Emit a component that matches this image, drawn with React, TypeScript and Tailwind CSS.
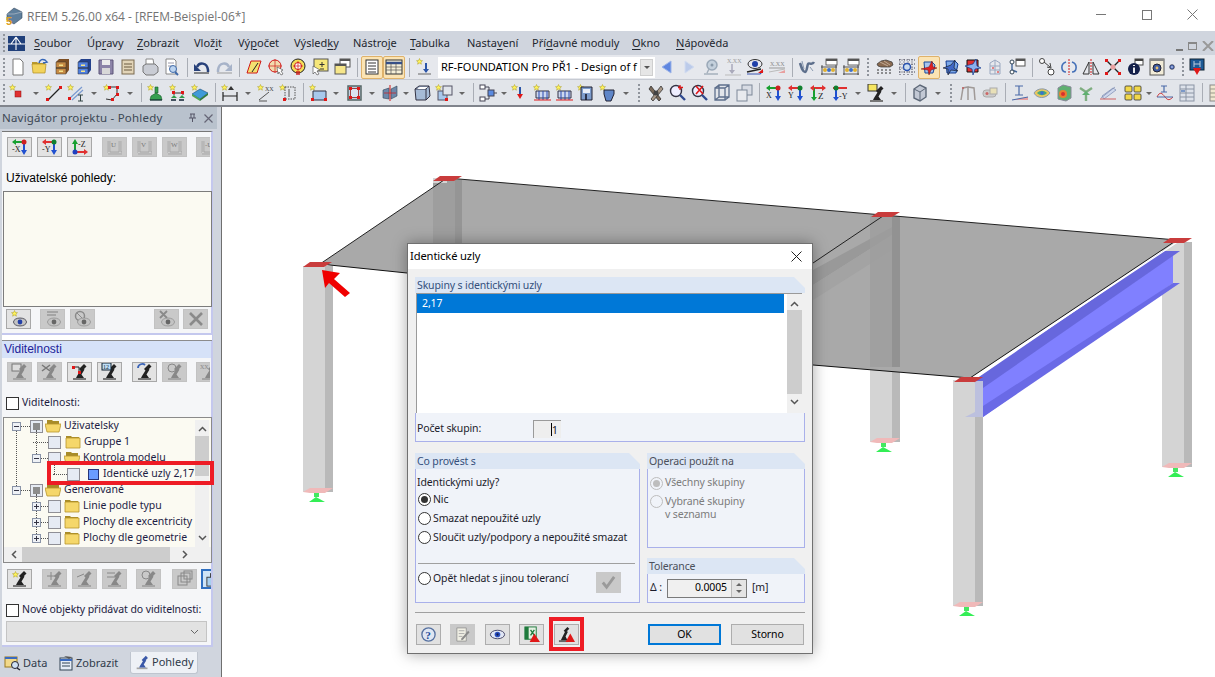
import React from 'react';

const star = <path d="M3.5 .5l.9 2 2.1.2-1.6 1.4.5 2.1-1.9-1.1-1.9 1.1.5-2.1L.5 2.700l2.100-.2z" fill="#fff35a" stroke="#a89a20" strokeWidth=".5" />;
const dot = (x: number, y: number) => <rect x={x} y={y} width="3" height="3" fill="#e01818" />;
const txt = (x: number, y: number, s: string, c = '#333', z = 6) => <text x={x} y={y} fontSize={z} fontFamily="'Liberation Serif',serif" fill={c}>{s}</text>;
const folder = <g><path d="M1 6V4h5l1 1h7v2H1z" fill="#b89a30" /><path d="M1 6h14l-1 9H2z" fill="#f2d35c" stroke="#b08c20" strokeWidth=".7" /></g>;
const mic = (c = '#222') => <g><path d="M2 15h13v2H2z" fill={c === '#222' ? '#777' : '#a5a5a5'} /><path d="M6 13l5-8 2.500 1.500-3 5 2.500 3.500H5z" fill={c} /><path d="M8 6l5-5 2.500 2.500-5 5z" fill={c} /></g>;
const eyeG = (c = '#8a8a8a', p = '#666') => <g><ellipse cx="10" cy="12" rx="6.500" ry="4" fill="#c4c4c4" stroke={c} strokeWidth=".7" /><circle cx="10" cy="12" r="2.400" fill={p} /></g>;
const cabinet = (a: string, b: string) => <g><path d="M3 4l3-3h10v11l-3 4H3z" fill={a} /><path d="M3 4h10v12H3z" fill={b} stroke="#333" strokeWidth=".5" /><path d="M3 10h10" stroke="#222" /><rect x="6" y="6.500" width="4" height="1.500" fill="#f4e48c" /><rect x="6" y="12.500" width="4" height="1.500" fill="#f4e48c" /></g>;
const abacus = <g><rect x="6" y="1" width="11" height="6" fill="#fff" stroke="#444" strokeWidth=".8" /><path d="M6 1h11v2H6z" fill="#555" /><path d="M1 9h16M1 16h16M2 7v10M16 7v10" stroke="#333" strokeWidth=".8" fill="none" /><circle cx="5" cy="12" r="2" fill="#e0b030" /><circle cx="9" cy="12" r="2" fill="#3f70c8" /><circle cx="13" cy="12" r="2" fill="#e0b030" /></g>;
const cubeW = (f: string, e = '#1a4a9a') => <g><path d="M4 4h8l3 3-2 8H5z" fill={f} stroke={e} /><path d="M1 11L9 9l3-6 1 6 4 1-6 2-2 5-1-5z" fill="#e02020" stroke="#701010" strokeWidth=".5" /></g>;
const axis = (a: string, b: string, c: string, t: string) => (
  <g>
    <path d="M2 4h12" stroke={a} strokeWidth="2" /><path d="M1 4l4-3v6z" fill={a} />
    <path d="M13 4v10" stroke={b} strokeWidth="2" /><path d="M10 12h6l-3 5z" fill={b} />
    <circle cx="13" cy="4" r="2.500" fill={c} />
    {txt(1, 14, t, '#222', 8)}
  </g>
);
const grayAxis = (t: string) => (
  <g fill="none">
    <path d="M2 15h14M14 3v12M3 3v12" stroke="#8c8c8c" strokeWidth="2.400" />
    <path d="M2 15h14M14 3v12M3 3v12" stroke="#e2e2e2" strokeWidth="1" />
    <text x="5" y="9" fontSize="7" fontFamily="'Liberation Serif',serif" fill="#777">{t}</text>
  </g>
);

const icons: Record<string, React.ReactNode> = {
  new: <path d="M4 1h7l3 3v13H4z" fill="#fff" stroke="#777" />,
  open: <g>{folder}<path d="M8 5c1-4 4-4 6-3l2 2-4 1" fill="none" stroke="#3566b8" strokeWidth="1.500" /></g>,
  cabB: cabinet('#7d4f24', '#c68a44'),
  cabN: cabinet('#23418c', '#4f7fe0'),
  floppy: <g><path d="M2 2h14v14H2z" fill="#8c84a8" stroke="#5c5478" /><rect x="5" y="2" width="8" height="5" fill="#ececec" /><rect x="5" y="10" width="8" height="6" fill="#d8d8d8" /></g>,
  notes: <g><rect x="3" y="2" width="12" height="14" fill="#e2d4b8" stroke="#7a6a50" /><path d="M5 6h8M5 9h8M5 12h8" stroke="#6a5a40" /></g>,
  print: <g><path d="M5 1h7l1 6H5z" fill="#fff" stroke="#888" /><path d="M2 8l3-2h9l3 3v5l-4 3H5l-3-3z" fill="#c9ccd4" stroke="#777" /></g>,
  preview: <g><path d="M3 1h8l2 2v13H3z" fill="#fff" stroke="#888" /><path d="M5 5h6M5 8h4" stroke="#99a" /><circle cx="10" cy="11" r="3.500" fill="#bcd4f0" stroke="#406aa8" /><path d="M12 14l3 3" stroke="#406aa8" strokeWidth="2" /></g>,
  undo: <g><path d="M4 9c2-5 10-5 11 3v2" fill="none" stroke="#28417a" strokeWidth="2.500" /><path d="M1 6l7 7H1z" fill="#28417a" /><path d="M1 15h15" stroke="#222" /></g>,
  redo: <g><path d="M14 9C12 4 4 4 3 12v2" fill="none" stroke="#a7b3c9" strokeWidth="2.500" /><path d="M17 6l-7 7h7z" fill="#a7b3c9" /><path d="M2 15h15" stroke="#999" /></g>,
  para: <g><path d="M6 3h10l-4 12H2z" fill="#f4e070" stroke="#d01818" /><path d="M7 14l6-9" stroke="#222" /></g>,
  target: <g><circle cx="8" cy="8" r="6" fill="#f2dcae" stroke="#d01818" /><path d="M8 1v14M1 8h14" stroke="#d01818" strokeWidth=".7" /><path d="M10 9l6 3-2 1 2 3-2 1-2-3-1 2z" fill="#fff" stroke="#444" strokeWidth=".6" /></g>,
  targetY: <g><circle cx="9" cy="8" r="7" fill="#f4de58" stroke="#222" /><circle cx="9" cy="8" r="3.500" fill="#fff" stroke="#d01818" /><path d="M9 3v10M4 8h10" stroke="#d01818" strokeWidth=".7" /><path d="M7 13h4v4H7z" fill="#d01818" opacity=".7" /></g>,
  noteC: <g><rect x="3" y="1" width="14" height="12" fill="#f6e77a" stroke="#555" /><path d="M11 4v5M8.500 6.500h5M9 11h4" stroke="#333" /><path d="M2 8l7 4-3 1 2 3-2 1-2-3-2 2z" fill="#fff" stroke="#444" strokeWidth=".6" /></g>,
  wins: <g><rect x="7" y="1" width="10" height="8" fill="#fff" stroke="#555" /><path d="M7 1h10v2H7z" fill="#555" /><rect x="2" y="6" width="11" height="10" fill="#f6e68a" stroke="#555" /><path d="M2 6h11v2H2z" fill="#555" /></g>,
  list: <g><rect x="3" y="2" width="12" height="14" fill="#fff" stroke="#333" /><path d="M5 5h8M5 8h8M5 11h8M5 14h8" stroke="#333" /></g>,
  table: <g><rect x="1" y="2" width="16" height="14" fill="#f6f0d8" stroke="#333" /><path d="M1 5h16" stroke="#35508a" strokeWidth="2.500" /><path d="M1 9h16M1 12h16M6 5v11M11 5v11" stroke="#555" strokeWidth=".7" /></g>,
  arrStar: <g><g transform="translate(1 0)">{star}</g><path d="M11 5v9" stroke="#2b55a8" strokeWidth="2" /><path d="M8 11h6l-3 4z" fill="#2b55a8" /><path d="M3 16h13" stroke="#666" /></g>,
  navL: <path d="M13 3v12L4 9z" fill="#5f86e0" stroke="#9db4e8" />,
  navR: <path d="M5 3v12l9-6z" fill="#bccbea" stroke="#d2dcf0" />,
  pinG: <g><circle cx="10" cy="7" r="5" fill="#c4d0dc" stroke="#9aa8b8" strokeWidth="1.500" /><circle cx="10" cy="7" r="1.500" fill="#8898a8" /><path d="M7 11l-2 4M2 16h14" stroke="#a5b0bc" strokeWidth="1.500" /></g>,
  xxD: <g>{txt(3, 5, 'X.XX', '#9a9a9a')}<path d="M8 6v9" stroke="#aab" strokeWidth="1.500" /><path d="M5 12h6l-3 4z" fill="#aab" /><path d="M1 17h16" stroke="#bbb" /></g>,
  eye: <g><ellipse cx="9" cy="6" rx="7" ry="4.500" fill="#e8e8f0" stroke="#333" /><circle cx="9" cy="6" r="3" fill="#1f3fa8" /><path d="M1 14l14-3" stroke="#222" strokeWidth="1.500" /><path d="M1 16h13l3-3" stroke="#3a54b0" strokeWidth="1.200" fill="none" /><path d="M12 15l5-4v4z" fill="#e01818" /></g>,
  xxL: <g>{txt(2, 8, 'X.XX', '#8a8a8a')}<path d="M1 10h16" stroke="#999" /><path d="M1 14l16-3" stroke="#bbb" /><path d="M10 15l7-3v3z" fill="#e8a0a0" /></g>,
  wave: <g><path d="M2 5c2 6 3 9 5 9s2-6 3-8 4 2 6-2" fill="none" stroke="#5d6f8c" strokeWidth="2.500" /><path d="M4 3l2 8M12 9l3 4" stroke="#8a9ab0" /></g>,
  abac: abacus,
  hand: <g><path d="M1 6l4-3 5-1 6 2 1 3-3 2H5L2 8z" fill="#8a6a50" stroke="#333" strokeWidth=".7" /><path d="M4 4l8 4M8 3l6 4" stroke="#d8c4b0" strokeWidth=".7" /><path d="M1 12h2M5 12h2M9 12h2M13 12h2M1 15h2M5 15h2M9 15h2M13 15h2" stroke="#333" /></g>,
  gridT: <g><path d="M1 2h16M1 6h16M1 10h16M1 14h16M2 1v16M6 1v16M10 1v16M14 1v16" stroke="#445" strokeDasharray="1 1.500" /><circle cx="9" cy="9" r="3.500" fill="#cde" stroke="#2650b0" strokeWidth="1.400" /></g>,
  cubeA: cubeW('#a8c4ee'),
  cube1: <g><path d="M4 3h9l3 3-2 9H5z" fill="#7aa6e8" stroke="#123a90" /><path d="M1 10l8-3 4-5-1 8 4 3-7-1-3 5v-6z" fill="#4068c8" stroke="#111" strokeWidth=".6" /></g>,
  cube2: <g><path d="M3 2h11v12H3z" fill="#e03030" stroke="#111" /><path d="M1 8l8-2 3-5 1 7 4 2-6 1-2 6-1-6z" fill="#8ab0ee" stroke="#123a90" strokeWidth=".7" /></g>,
  build: <g fill="none" stroke="#9aa8c0"><path d="M4 16V5l5-3 5 3v11zM4 8h10M4 12h10M9 2v14" /><circle cx="7" cy="10" r="1" fill="#e06060" stroke="none" /><circle cx="12" cy="14" r="1" fill="#e06060" stroke="none" /></g>,
  nodes: <g><rect x="8" y="1" width="9" height="7" fill="#fff" stroke="#555" /><path d="M8 1h9v2H8z" fill="#555" /><path d="M4 5v7l5 2" fill="none" stroke="#45699c" strokeWidth="1.400" /><circle cx="4" cy="4" r="2" fill="#fff" stroke="#345" /><circle cx="4" cy="14" r="2" fill="#fff" stroke="#345" /></g>,
  conn: <g fill="#fff" stroke="#444"><circle cx="4" cy="3" r="2.500" /><circle cx="13" cy="14" r="3" /><path d="M6 4l6 5M12 5l1 5-4-1" fill="none" /></g>,
  rot: <g><path d="M9 1v16" stroke="#d01818" strokeDasharray="2 1" /><path d="M6 4C0 6 1 14 6 14M12 4c6 2 5 10 0 10" fill="none" stroke="#4470b8" strokeWidth="1.600" /></g>,
  mirror: <g><path d="M9 1v16" stroke="#d01818" strokeDasharray="2 1" /><path d="M7 4L1 16h6zM11 4l6 12h-6z" fill="none" stroke="#333" /></g>,
  xred: <g><path d="M3 3l12 12M15 3L3 15" stroke="#222" strokeWidth="1.400" /><rect x="1" y="1" width="3" height="3" fill="#e01818" /><rect x="14" y="1" width="3" height="3" fill="#e01818" /><rect x="1" y="14" width="3" height="3" fill="#e01818" /><rect x="14" y="14" width="3" height="3" fill="#e01818" /><circle cx="9" cy="9" r="2.500" fill="#e8a0a0" /></g>,
  info: <g><rect x="9" y="1" width="8" height="6" fill="#fff" stroke="#444" /><path d="M9 1h8v2H9z" fill="#444" /><circle cx="8" cy="11" r="6" fill="#14204a" /><path d="M8 7v1M8 9.500V15" stroke="#fff" strokeWidth="1.800" /></g>,
  gearDoc: <g><rect x="2" y="1" width="14" height="16" fill="#f2ecd8" stroke="#555" /><path d="M2 1h14v2H2z" fill="#888" /><circle cx="9" cy="10" r="4" fill="#3c5aa0" stroke="#223" /><circle cx="9" cy="10" r="1.400" fill="#e8c070" /></g>,
  gearS: <g><circle cx="6" cy="9" r="3.500" fill="#5070c0" stroke="#223" /><circle cx="6" cy="9" r="1" fill="#fff" /></g>,
  last: <g><rect x="2" y="1" width="14" height="11" fill="#1d5a96" stroke="#123" /><path d="M6 3v6M12 3v6M6 6h6" stroke="#bcd" /><path d="M5 10h8l-4 7z" fill="#e01818" /></g>,
  s0: <g>{star}<rect x="6" y="7" width="6" height="6" fill="#e03030" stroke="#901010" strokeWidth=".5" /></g>,
  sLine: <g>{star}<path d="M3 16L15 4" stroke="#222" strokeWidth="1.200" />{dot(1, 14)}{dot(14, 2)}</g>,
  sI: <g>{star}<path d="M3 14L15 3M5 16L16 6" stroke="#7a9ad0" strokeWidth="1.200" /><path d="M11 11h5M13.500 11v6M11 17h5" stroke="#344" />{dot(1, 13)}</g>,
  sPoly: <g>{star}<path d="M6 3h8v7l-5 6-6-1" fill="none" stroke="#333" />{dot(5, 2)}{dot(13, 2)}{dot(13, 9)}{dot(8, 14)}</g>,
  sGreen: <g>{star}<path d="M8 3h3v6h-3zM4 12l5-3 5 3 1 4H3z" fill="#35a050" stroke="#155a25" strokeWidth=".6" /><path d="M3 16h12" stroke="#123" /></g>,
  sNodes: <g>{star}<path d="M5 9h9M5 9v2M14 9v2" stroke="#333" />{dot(3, 7)}{dot(12, 7)}<path d="M2 14l3-3 3 3zM10 14l3-3 3 3z" fill="#2f9a48" /><path d="M2 16h5M10 16h5" stroke="#123" strokeWidth="1.500" /></g>,
  sPlate: <g>{star}<path d="M1 10l8-5 8 4-8 6z" fill="#3f9ad8" stroke="#1a4a7a" strokeWidth=".6" /><path d="M1 10l8 5v2l-8-5z" fill="#50a850" /><path d="M9 15l8-6v2l-8 6z" fill="#2f7a3a" /></g>,
  sDim: <g>{star}<path d="M2 8v9M16 8v9M2 12h14" stroke="#222" strokeWidth="1.200" /><path d="M7 6l3-4 3 4z" fill="#333" /></g>,
  sXX: <g>{star}{txt(8, 7, 'XX', '#444')}<path d="M2 16L12 8M2 17h8" stroke="#555" /></g>,
  sGrid: <g>{star}<rect x="6" y="3" width="10" height="12" fill="none" stroke="#555" strokeDasharray="1.500 1" />{dot(4, 14)}<path d="M10 5v8" stroke="#555" /></g>,
  sRect: <g>{star}<path d="M4 7h13v9H4z" fill="#a8c8ec" stroke="#334" />{dot(2, 14)}{dot(15, 14)}</g>,
  sqRed: <g><rect x="3" y="2" width="13" height="14" fill="#c4d0e0" stroke="#566" strokeWidth="1.500" /><rect x="5.500" y="4.500" width="8" height="9" fill="#dbe4f0" stroke="#a04040" />{dot(4, 3)}{dot(12, 3)}{dot(4, 12)}{dot(12, 12)}</g>,
  wings: <g><path d="M2 6l6-2v11l-6-1zM16 2l-6 3v10l6-3z" fill="#6d88aa" stroke="#345" strokeWidth=".6" /><path d="M9 1v16" stroke="#d01818" /><path d="M3 9h12" stroke="#d01818" strokeWidth=".7" /></g>,
  box3: <g><path d="M2 5l4-3h10l1 10-4 4H3z" fill="#a6bbd6" stroke="#334" /><path d="M2 5h11v11" fill="none" stroke="#334" /><path d="M13 5l3-3" stroke="#334" /><path d="M4 5l3-2h8l-3 2z" fill="#fff" /></g>,
  boxes: <g>{star}<rect x="3" y="7" width="9" height="9" fill="#a8c8ec" stroke="#556" /><rect x="8" y="2" width="9" height="9" fill="#e0e4ea" stroke="#556" />{dot(10, 14)}</g>,
  arrows: <g fill="#fff" stroke="#445"><rect x="1" y="1" width="5" height="4" /><rect x="1" y="13" width="5" height="4" /><path d="M6 3h4v4M6 15h4v-4" fill="none" /><rect x="9" y="6" width="6" height="6" fill="#5a8ae0" /><path d="M15 9h3" /></g>,
  sDown: <g>{star}<path d="M9 3v10" stroke="#2b55a8" strokeWidth="2" /><path d="M6 10h6l-3 5z" fill="#e01818" /></g>,
  sBars: <g>{star}<path d="M3 7h13v7H3z" fill="#cdd8f0" stroke="#334" /><path d="M6 7v9M10 7v9M14 7v9" stroke="#2a4ab0" /><path d="M1 16h17" stroke="#e01818" /></g>,
  sBlue: <g>{star}<path d="M4 3h11v13H4z" fill="#7d9ccc" stroke="#223" /><rect x="6" y="5" width="7" height="4" fill="#e8eef8" /><path d="M9 10v6" stroke="#112" strokeWidth="1.500" /></g>,
  sMan: <g>{star}<path d="M5 6h10v4l-3 7H7l-2-7z" fill="#5f86c8" stroke="#223" /></g>,
  tools: <g><path d="M4 2l10 13-2 2L2 5z" fill="#7a6a5a" stroke="#222" strokeWidth=".7" /><path d="M14 2L4 15l2 2L16 5z" fill="#a89888" stroke="#222" strokeWidth=".7" /><circle cx="9" cy="9" r="2.500" fill="#444" /></g>,
  zoomR: <g><circle cx="7" cy="7" r="5.500" fill="#eef" stroke="#334" strokeWidth="1.400" /><path d="M11 11l5 5" stroke="#304a90" strokeWidth="2.400" /><path d="M11 1v5M9 3.500h5" stroke="#e01818" strokeWidth="1.300" /></g>,
  zoomX: <g><circle cx="7" cy="7" r="5.500" fill="#eef" stroke="#334" strokeWidth="1.400" /><path d="M11 11l5 5" stroke="#304a90" strokeWidth="2.400" /><path d="M5 2l7 8M12 2l-7 8" stroke="#e01818" strokeWidth="1.600" /></g>,
  wire: <g fill="none" stroke="#5d6f8c" strokeWidth="1.300"><path d="M2 4h10v12H2zM6 1h10v12H6zM2 4l4-3M12 4l4-3M2 16l4-3M12 16l4-3" /></g>,
  boxG: <g stroke="#7d8898" fill="#d8dce4"><rect x="7" y="1" width="10" height="10" /><rect x="2" y="6" width="10" height="11" fill="#e8eaee" /></g>,
  aX: axis('#18a030', '#2050d0', '#d02020', '-X'),
  aY: axis('#e03030', '#2050d0', '#108030', '-Y'),
  aZ: <g><path d="M4 14h11" stroke="#e03030" strokeWidth="2" /><path d="M17 14l-4-3v6z" fill="#e03030" /><path d="M4 3v11" stroke="#18a030" strokeWidth="2" /><path d="M1 6l3-5 3 5z" fill="#18a030" /><circle cx="4" cy="14" r="2.500" fill="#2040c0" />{txt(7, 9, '-Z', '#222', 8)}</g>,
  tX: axis('#18a030', '#2050d0', '#d02020', 'X'),
  tY: axis('#e03030', '#2050d0', '#108030', 'Y'),
  tZ: <g><path d="M2 4h14" stroke="#e03030" strokeWidth="2" /><path d="M5 4v11" stroke="#18a030" strokeWidth="2" /><path d="M2 13h6l-3 4z" fill="#18a030" /><path d="M1 4l4-3v6zM17 4l-4-3v6z" fill="#e03030" />{txt(9, 15, 'Z', '#222', 9)}</g>,
  tmY: <g><path d="M2 4h14" stroke="#e03030" strokeWidth="2" /><path d="M5 4v11" stroke="#2050d0" strokeWidth="2" /><path d="M2 13h6l-3 4z" fill="#2050d0" /><circle cx="5" cy="4" r="2.500" fill="#108030" />{txt(8, 15, '-Y', '#222', 8)}</g>,
  micY: <g><rect x="1" y="0" width="9" height="7" fill="#f6e660" stroke="#333" /><g transform="translate(1 1)">{mic()}</g></g>,
  house: <g><path d="M3 5l6-4 6 3v9l-6 4-6-3z" fill="#c2c8d4" stroke="#5d6878" strokeWidth="1.400" /><path d="M9 8l6-4M9 8L3 5M9 8v9" stroke="#5d6878" /></g>,
  frames: <g fill="none" stroke="#a09a98" strokeWidth="1.500"><path d="M2 16l2-12 5-1v13M16 16l-1-12-6-1" /><circle cx="4" cy="4" r="1" fill="#c06060" stroke="none" /></g>,
  pill: <g><rect x="2" y="6" width="13" height="7" rx="3" fill="#ccc" stroke="#aaa" /><rect x="9" y="4" width="7" height="6" fill="#e8e0b8" stroke="#aaa" /><circle cx="6" cy="9.500" r="1.500" fill="#c66" /></g>,
  res: <g><path d="M8 2v9M4 2h8M4 11h8" stroke="#4a6aa8" strokeWidth="1.200" /><path d="M1 16l16-3v3z" fill="#e8a0a0" /><path d="M1 16l16-3" stroke="#4a6aa8" /></g>,
  lens: <g><path d="M1 9c3-5 12-6 16 0-4 6-13 6-16 0z" fill="#e8c860" stroke="#8a9ab0" /><path d="M4 9c3-3 7-3 10 0-3 3-7 3-10 0z" fill="#4aa878" /><circle cx="9" cy="9" r="1.800" fill="#3a70d0" /></g>,
  colorCube: <g><path d="M3 4l5-3 8 2v11l-5 3-8-2z" fill="#5fb070" stroke="#889" /><circle cx="8" cy="10" r="4" fill="#e88030" /><circle cx="8" cy="10" r="2" fill="#d83030" /></g>,
  arrG: <g><path d="M9 17V8M9 8L3 4M9 8l6-4" stroke="#7fae80" strokeWidth="2.400" /><path d="M5 11h8l-4-4z" fill="#5fb070" /></g>,
  lensB: <g><path d="M2 14L16 3M3 12l11-8 3 2-12 9z" fill="#cfd8ec" stroke="#7a8ab0" strokeWidth=".7" /><path d="M1 15h16" stroke="#d06060" /></g>,
  yellows: <g fill="#f2d84a" stroke="#333" strokeWidth=".8"><rect x="1" y="2" width="7" height="6" rx="1" /><rect x="10" y="2" width="7" height="6" rx="1" /><rect x="1" y="10" width="7" height="6" rx="1" /><rect x="10" y="10" width="7" height="6" rx="1" /></g>,
  resW: <g><path d="M8 2v6M5 2h6M5 8h6" stroke="#4a6aa8" strokeWidth="1.200" /><path d="M1 13c3-6 5-4 8 0s5 3 8 0" fill="none" stroke="#d04040" /><path d="M1 13h16" stroke="#4a6aa8" /></g>,
  rows: <g><rect x="2" y="1" width="14" height="16" fill="#dde2ea" stroke="#8a94a4" /><path d="M2 5h14M2 9h14M2 13h14M8 1v16" stroke="#8a94a4" /><rect x="3" y="6" width="4" height="2" fill="#7a98c8" /></g>,
  tabEnd: <g><rect x="2" y="1" width="14" height="16" fill="#f0e8d0" stroke="#888" /><path d="M2 5h14M2 9h14M2 13h14" stroke="#998" /></g>,
  // tlacitka v panelu a v dialogu
  uG: grayAxis('U'), vG: grayAxis('V'), wG: grayAxis('W'), muG: grayAxis('-U'),
  eyeS: <g><g transform="translate(1 0)">{star}</g>{eyeG('#223', '#2440a8')}</g>,
  eye1: <g><path d="M3 2h11M3 5h9" stroke="#999" strokeWidth="1.500" />{eyeG()}</g>,
  eye2: <g><circle cx="6" cy="6" r="4.500" fill="none" stroke="#8a8a8a" strokeWidth="1.500" /><path d="M3 3l6 6" stroke="#8a8a8a" />{eyeG()}</g>,
  eyeX: <g><path d="M2 1l7 7M9 1L2 8" stroke="#8a8a8a" strokeWidth="1.800" />{eyeG()}</g>,
  xG: <path d="M3 3l12 12M15 3L3 15" stroke="#8a8a8a" strokeWidth="2.600" />,
  m0: <g><rect x="1" y="1" width="9" height="7" fill="#ddd" stroke="#777" />{mic('#888')}</g>,
  m1: <g><path d="M1 2l8 6M9 2L1 8" stroke="#777" strokeWidth="1.500" />{mic('#888')}</g>,
  m2: <g>{mic()}<path d="M1 4h7v5" fill="none" stroke="#222" />{dot(1, 3)}{dot(7, 8)}</g>,
  m3: <g>{mic()}<rect x="1" y="0" width="9" height="7" fill="#bfe0f8" stroke="#123" />{txt(2, 6, '12', '#123')}</g>,
  m4: <g>{mic()}<path d="M2 5c0-4 5-5 7-3" fill="none" stroke="#3a64b8" strokeWidth="1.800" /></g>,
  m5: <g>{mic('#888')}<circle cx="6" cy="5" r="4" fill="none" stroke="#888" /></g>,
  m6: <g>{mic('#888')}{txt(0, 6, 'XX', '#888')}</g>,
  mS: <g>{mic()}<g transform="translate(1 1)">{star}</g></g>,
  mA: <g>{mic('#888')}<path d="M1 6h8M5 2v8" stroke="#888" /></g>,
  mB: <g>{mic('#888')}<path d="M1 7l7-3" stroke="#888" /></g>,
  mC: <g>{mic('#888')}<path d="M1 3h8M1 7h8" stroke="#888" /></g>,
  frm: <g fill="none" stroke="#888"><rect x="2" y="6" width="9" height="9" /><rect x="5" y="3" width="9" height="9" /><rect x="8" y="1" width="8" height="8" /></g>,
  frmB: <g fill="none" stroke="#333"><rect x="5" y="3" width="10" height="10" fill="#e8f0f8" /><rect x="1" y="7" width="10" height="10" fill="#a8d0f0" /></g>,
  help: <g><circle cx="9" cy="9" r="7" fill="#dfe6f2" stroke="#5570a0" strokeWidth="1.400" /><text x="5.500" y="14" fontSize="12" fontWeight="700" fontFamily="'Liberation Serif',serif" fill="#224a9a">?</text></g>,
  edit: <g><path d="M3 2h10v14H3z" fill="#f0efe4" stroke="#999" /><path d="M5 5h6M5 8h6M5 11h4" stroke="#aaa" /><path d="M8 13l7-8 1.500 1.500-7 8-2 .5z" fill="#8a8a8a" /></g>,
  eyeB: <g><ellipse cx="9" cy="9" rx="7.500" ry="4.500" fill="#e0e6f4" stroke="#446" /><circle cx="9" cy="9" r="3" fill="#2a4ec0" /><circle cx="9" cy="9" r="1.200" fill="#101c50" /></g>,
  excel: <g><rect x="2" y="1" width="12" height="13" fill="#e4f0e2" stroke="#1e7a3c" /><path d="M2 1h4v13H2z" fill="#1e7a3c" /><path d="M8 4l4 6M12 4l-4 6" stroke="#1e7a3c" strokeWidth="1.400" /><path d="M12 8l6 9H7z" fill="#e01818" /></g>,
  micW: <g><path d="M1 15h10v2H1z" fill="#666" /><path d="M4 13l4-8 2.500 1-2.500 5 2 4H3z" fill="#222" /><path d="M6 5l4-4 2 2-4 4z" fill="#222" /><path d="M13 8l5 9H8z" fill="#e01818" /></g>,
  check: <path d="M3 9l4 5 8-11" fill="none" stroke="#9a9a9a" strokeWidth="3" />,
};

const row1 = [':0', 'new', 'open', 'cabB', 'cabN', 'floppy', 'notes', 'print', 'preview', '|', 'undo', 'redo', '|', 'para', 'target', 'targetY', 'noteC', 'wins', '|', 'list!', 'table!', '|', 'arrStar', 'COMBO', 'navL', 'navR', 'pinG', 'xxD', 'eye', 'xxL', '|', 'wave', 'abac', 'abac', ':', 'hand', 'gridT', 'cubeA!', 'cube1', 'cube2', 'build', 'nodes', '|', 'conn', 'rot', 'mirror', 'xred', 'info', 'gearDoc', 'gearS~', ':1', 'last'];
const row2 = [':0', 's0', 'v', 'sLine', 'sI', 'v', 'sPoly', 'v', '|', 'sGreen', 'sNodes', 'sPlate', '|', 'sDim', 'v', 'sXX', 'sGrid', '|', 'sRect', 'v', 'sqRed', 'v', 'wings', 'n', 'box3', 'boxes', 'v', '|', 'arrows', 'n', 'sDown', 'sBars', 'sBars', 'sBlue', 'sMan', 'v', ':', 'tools', 'zoomR', 'zoomX', 'wire', 'boxG', '|', 'tX', 'tY', 'tZ', 'tmY', 'v', 'micY', 'v', '|', 'house', 'v', ':', 'frames', 'pill', '|', 'res', 'lens', 'colorCube', 'arrG', 'lensB', '+', 'yellows', 'n', 'resW', 'rows', '|', 'tabEnd'];

const Grip = () => (
  <div className="flex flex-col gap-[2px] items-center">
    {[0, 1, 2, 3, 4].map(i => <span key={i} className="w-[2px] h-[2px] bg-[#8f949c]" />)}
  </div>
);

const Ico = ({ n, size = 18 }: { n: string; size?: number }) => (
  <svg width={size} height={size} viewBox="0 0 18 18" className="shrink-0">{icons[n]}</svg>
);

const Combo = () => (
  <div className="w-[217px] ml-[3px] mr-[1px] h-[21px] shrink-0 bg-white flex items-center pl-[3px] text-[11px] text-black font-['Noto_Sans',sans-serif] overflow-hidden">
    <span className="flex-1 whitespace-nowrap">RF-FOUNDATION Pro PŘ1 - Design of f</span>
    <span className="w-[13px] h-[17px] mr-[2px] bg-[#e6e6e6] border border-[#cfcfcf] flex items-center justify-center">
      <span className="w-0 h-0 border-x-[3px] border-x-transparent border-t-[3px] border-t-[#555]" />
    </span>
  </div>
);

const ToolRow = ({ items, className }: { items: string[]; className: string }) => (
  <div className={`flex items-center shrink-0 overflow-hidden ${className}`}>
    {items.map((it, i) => {
      if (it === 'COMBO') return <Combo key={i} />;
      if (it === ':0') return <div key={i} className="w-[7px] flex justify-center shrink-0"><Grip /></div>;
      if (it === ':1') return <div key={i} className="w-[6px] flex justify-center shrink-0"><Grip /></div>;
      if (it === ':') return <div key={i} className="w-[12px] flex justify-center shrink-0"><Grip /></div>;
      if (it === '|') return <div key={i} className="w-[8px] flex justify-center shrink-0"><span className="w-px h-[19px] bg-[#a9adb5]" /></div>;
      if (it === '+') return <div key={i} className="w-[3px] shrink-0" />;
      if (it === 'v' || it === 'n') {
        return (
          <div key={i} className={`${it === 'v' ? 'w-[14px]' : 'w-[10px]'} flex justify-center shrink-0`}>
            <span className="w-0 h-0 mt-[2px] border-x-[3px] border-x-transparent border-t-[3px] border-t-[#666]" />
          </div>
        );
      }
      const active = it.endsWith('!');
      const narrow = it.endsWith('~');
      const name = it.replace(/[!~]/, '');
      return (
        <div key={i} className={`${narrow ? 'w-[12px] overflow-hidden' : 'w-[22px]'} h-[23px] flex items-center justify-center shrink-0 ${active ? 'bg-[#fbe4b4] border border-[#dfb26a] rounded-[2px]' : ''}`}>
          <Ico n={name} size={narrow ? 12 : 18} />
        </div>
      );
    })}
  </div>
);

const menus = [
  ['', 'S', 'oubor', 'w-[53px]'], ['Úp', 'r', 'avy', 'w-[50px]'], ['', 'Z', 'obrazit', 'w-[57px]'], ['Vlož', 'i', 't', 'w-[44px]'],
  ['Vý', 'p', 'očet', 'w-[56px]'], ['Výsled', 'k', 'y', 'w-[59px]'], ['Nástro', 'j', 'e', 'w-[57px]'], ['', 'T', 'abulka', 'w-[57px]'],
  ['Nasta', 'v', 'ení', 'w-[65px]'], ['Pří', 'd', 'avné moduly', 'w-[100px]'], ['', 'O', 'kno', 'w-[44px]'], ['', 'N', 'ápověda', 'w-[70px]'],
];

const PBtn = ({ n, on, className = '' }: { n: string; on?: boolean; className?: string }) => (
  <div className={`w-[25px] h-[20px] shrink-0 flex items-center justify-center border ${on ? 'bg-[#e3e3e3] border-[#a8a8a8]' : 'bg-[#c9c9c9] border-[#c2c2c2]'} ${className}`}>
    <Ico n={n} size={18} />
  </div>
);

const Check = () => <span className="w-[13px] h-[13px] shrink-0 border border-[#8f8f96] bg-[#e6ebf4]" />;
const BigCheck = () => <span className="w-[13px] h-[13px] shrink-0 border border-[#333] bg-white" />;
const HalfCheck = () => <span className="w-[13px] h-[13px] shrink-0 border border-[#8f8f96] bg-[#e6ebf4] flex items-center justify-center"><span className="w-[7px] h-[7px] bg-[#8c8c8c]" /></span>;
const Exp = ({ open }: { open?: boolean }) => (
  <span className="relative w-[9px] h-[9px] shrink-0 border border-[#8a94a8] bg-[#eef1f6]">
    <span className="absolute left-[1px] top-[3px] w-[5px] h-px bg-[#334]" />
    {!open && <span className="absolute left-[3px] top-[1px] w-px h-[5px] bg-[#334]" />}
  </span>
);
const Dots = ({ w }: { w: string }) => <span className={`${w} shrink-0 border-t border-dotted border-[#555]`} />;
const Fold = () => <svg width="16" height="14" viewBox="0 0 16 14" className="shrink-0"><path d="M1 3V1h5l1 1h7v2z" fill="#a88c28" /><path d="M1 3h14v10H1z" fill="#f5d76a" stroke="#b8952c" strokeWidth=".8" /></svg>;
const FoldOpen = () => <svg width="16" height="14" viewBox="0 0 16 14" className="shrink-0"><path d="M2 3V1h5l1 1h6v3H2z" fill="#a88c28" /><path d="M0 5h16l-2 8H2z" fill="#f5d76a" stroke="#b8952c" strokeWidth=".8" /></svg>;

const Radio = ({ on, off }: { on?: boolean; off?: boolean }) => (
  <span className={`w-[13px] h-[13px] shrink-0 rounded-full border flex items-center justify-center ${off ? 'border-[#bdbdbd]' : 'border-[#333] bg-white'}`}>
    {on && <span className={`w-[7px] h-[7px] rounded-full ${off ? 'bg-[#bdbdbd]' : 'bg-[#333]'}`} />}
  </span>
);

const GroupHead = ({ title, gray }: { title: string; gray?: boolean }) => (
  <div className={`h-[16px] shrink-0 bg-[#dce6f4] pl-[2px] leading-[16px] [clip-path:polygon(0_0,calc(100%-11px)_0,100%_11px,100%_100%,0_100%)] ${gray ? 'text-[#4a4f5a]' : 'text-[#34507c]'}`}>{title}</div>
);

const DlgBtn = ({ n, off }: { n: string; off?: boolean }) => (
  <div className={`w-[25px] h-[21px] shrink-0 flex items-center justify-center border ${off ? 'bg-[#c9c9c9] border-[#c9c9c9]' : 'bg-[#e1e1e1] border-[#adadad]'}`}>
    <Ico n={n} size={17} />
  </div>
);

const Column = ({ x, top, bot }: { x: number; top: number; bot: number }) => (
  <g>
    <rect x={x} y={top} width={22} height={bot - top} fill="#d4d4d4" />
    <rect x={x + 22} y={top} width={8} height={bot - top} fill="#b9b9b9" />
    <path d={`M${x} ${bot}l7-4h23l-8 5h-15z`} fill="#f0b9b9" />
    <path d={`M${x + 11} ${bot + 1}h5v4h-5z`} fill="#44e860" />
    <path d={`M${x + 6} ${bot + 10}l7-5 9 5z`} fill="#33ee55" />
  </g>
);
const Cap = ({ x, y }: { x: number; y: number }) => <path d={`M${x} ${y + 5}l7-5h22l-8 5z`} fill="#c93c3c" />;

const Model = () => (
  <svg width="993" height="570" viewBox="222 107 993 570" className="absolute inset-0">
    <Column x={303} top={266} bot={492} />
    <Column x={870} top={240} bot={442} />
    <Column x={953} top={380} bot={606} />
    <Column x={1162} top={242} bot={467} />
    <path d="M320 264L447 178 1177 240 970 378 813 365 407 273z" fill="#a9a9a9" />
    {/* sloup a pruvlak pod deskou */}
    <rect x="433" y="180" width="22" height="100" fill="#9e9e9e" />
    <rect x="455" y="180" width="7" height="100" fill="#959595" />
    <rect x="433" y="178" width="14" height="5" fill="#d4d4d4" />
    <path d="M813 270L892 227V235L813 285z" fill="#999999" />
    <path d="M813 285L892 235V250L813 300z" fill="#a3a3a3" />
    <rect x="870" y="216" width="22" height="151" fill="#9d9d9d" opacity=".75" />
    <rect x="892" y="216" width="8" height="151" fill="#929292" />
    <path d="M983 387L1173 255V283L983 417z" fill="#8080ff" />
    <path d="M973 381L1163 251H1180L983 388z" fill="#6767dd" />
    <path d="M983 406L1173 283H1180L983 417z" fill="#6a6ae6" />
    <path d="M975 381H983V417H965L975 412z" fill="#bcc0de" />
    <path d="M320 264L447 178 1177 240" fill="none" stroke="#222" />
    <path d="M813 263L883 216" fill="none" stroke="#222" />
    <path d="M320 264L407 273M813 365L970 378L1177 240" fill="none" stroke="#111" />
    <path d="M972 379L1179 241" fill="none" stroke="#fff" strokeWidth="1.200" />
    <Cap x={303} y={262} />
    <Cap x={433} y={176} />
    <Cap x={871} y={212} />
    <Cap x={954} y={377} />
    <Cap x={1163} y={238} />
    <path d="M322 270L340 273 334 279 350 293 345 297 329 283 325 288z" fill="#f00000" />
  </svg>
);

export default function App() {
  return (
    <div className="w-[1215px] h-[677px] overflow-hidden bg-white flex flex-col font-['Noto_Sans',sans-serif]">
      {/* titulek okna */}
      <div className="h-[31px] shrink-0 bg-white flex items-center relative">
        <svg width="18" height="19" viewBox="0 0 18 19" className="ml-[5px] mt-[2px]">
          <path d="M2 7l7-6 8 4v6l-8 6-7-4z" fill="#5f7f9c" stroke="#34485c" strokeWidth=".6" />
          <path d="M9 7l8-2M9 7L2 7" stroke="#9ab" />
          <text x="1" y="18" fontSize="11" fontWeight="700" fill="#e0a020" fontFamily="'Liberation Sans',sans-serif">5</text>
        </svg>
        <span className="ml-[4px] mt-[2px] text-[12px] text-[#737373] font-['Open_Sans',sans-serif] whitespace-nowrap">RFEM 5.26.00 x64 - [RFEM-Beispiel-06*]</span>
        <div className="ml-auto flex items-center mt-[-2px] text-[#777]">
          <div className="w-[46px] flex justify-center"><span className="w-[10px] h-px bg-[#777]" /></div>
          <div className="w-[45px] flex justify-center"><span className="w-[10px] h-[10px] border border-[#777]" /></div>
          <div className="w-[46px] flex justify-center">
            <svg width="11" height="11" viewBox="0 0 11 11"><path d="M.5.500l10 10M10.500.500l-10 10" stroke="#777" /></svg>
          </div>
        </div>
      </div>

      {/* menu */}
      <div className="h-[24px] shrink-0 bg-[#d0d5de] flex items-center relative">
        <div className="w-[7px] flex justify-center"><Grip /></div>
        <svg width="17" height="15" viewBox="0 0 17 15" className="ml-[1px] mr-[9px]">
          <rect width="17" height="15" fill="#1f3f7a" />
          <path d="M0 8h17M8 1L3 8M8 1l5 7M8 1v13" stroke="#fff" strokeWidth="1.100" />
        </svg>
        {menus.map(([a, u, b, w]) => (
          <span key={u + b} className={`${w} shrink-0 text-[11px] text-[#22262e] whitespace-nowrap`}>{a}<span className="underline underline-offset-2">{u}</span>{b}</span>
        ))}
        <div className="absolute right-0 top-[10px] flex items-center gap-[5px] text-[#8a8f98] pr-[1px]">
          <span className="w-[7px] h-[2px] mt-[7px] bg-[#777]" />
          <span className="w-[9px] h-[8px] border border-[#888] border-t-2" />
          <svg width="12" height="10" viewBox="0 0 12 10"><path d="M1 0l10 10M11 0L1 10" stroke="#999" strokeWidth="2" /></svg>
        </div>
      </div>

      <ToolRow items={row1} className="h-[25px] bg-[#e6e8ed] border-b border-[#c6cad2]" />
      <ToolRow items={row2} className="h-[27px] bg-[#e2e5ea] border-b-2 border-[#80848c]" />

      <div className="flex-1 min-h-0 flex">
        {/* navigator */}
        <aside className="w-[222px] shrink-0 bg-[#d0d5de] border-r border-[#6f6f6f] flex flex-col relative">
          <div className="h-[22px] shrink-0 bg-[#b9c2cd] w-[217px] flex items-center pl-[2px] text-[11.5px] text-[#3b4754] whitespace-nowrap">
            <span className="flex-1 tracking-[.2px]">Navigátor projektu - Pohledy</span>
            <svg width="9" height="10" viewBox="0 0 9 10" className="mr-[7px]"><path d="M2 1h5M3 1v4M6 1v4M1 5h7M4.500 5v4" stroke="#556" fill="none" /></svg>
            <svg width="9" height="9" viewBox="0 0 9 9" className="mr-[4px]"><path d="M.500.500l8 8M8.500.500l-8 8" stroke="#667" strokeWidth="1.200" /></svg>
          </div>
          <div className="w-[217px] flex-1 min-h-0 bg-[#d0d5de] pl-[2px] pr-[4px] pt-[2px] flex flex-col">
            <div className="w-[211px] h-[516px] shrink-0 bg-[#f5f6f8] border-t border-[#777] flex flex-col text-[12px] border-r-2 border-r-[#c4c8ee] border-b-2 border-b-[#c4c8ee] relative">
              <div className="flex pl-[5px] pt-[5px] h-[26px] overflow-hidden w-[208px]">
                <PBtn n="aX" on /><PBtn n="aY" on className="ml-[5px]" /><PBtn n="aZ" on className="ml-[5px]" />
                <PBtn n="uG" className="ml-[10px]" /><PBtn n="vG" className="ml-[5px]" /><PBtn n="wG" className="ml-[5px]" /><PBtn n="muG" className="ml-[9px]" />
              </div>
              <div className="h-[33px] pl-[4px] pt-[12px] leading-[16px] text-black font-['Liberation_Sans',sans-serif]">Uživatelské pohledy:</div>
              <div className="h-[116px] w-[209px] ml-[1px] border border-[#7c7c7c] bg-[#fbfaf2]" />
              <div className="flex pl-[4px] pt-[2px] h-[24px]">
                <PBtn n="eyeS" on /><PBtn n="eye1" className="ml-[9px]" /><PBtn n="eye2" className="ml-[5px]" /><PBtn n="eyeX" className="ml-[59px]" /><PBtn n="xG" className="ml-[4px]" />
              </div>
              <div className="h-[8px] border-b border-[#8c8c8c] bg-white mt-[2px] -mr-[1px] border-t-2 border-t-[#c4c8ee]" />
              <div className="h-[17px] bg-[#d6e2f8] text-[#22229a] pl-[2px] leading-[17px] text-[12px] font-['Liberation_Sans',sans-serif]">Viditelnosti</div>
              <div className="flex pl-[5px] pt-[4px] h-[25px] overflow-hidden w-[208px]">
                <PBtn n="m0" /><PBtn n="m1" className="ml-[5px]" /><PBtn n="m2" on className="ml-[5px]" /><PBtn n="m3" on className="ml-[5px]" />
                <PBtn n="m4" on className="ml-[10px]" /><PBtn n="m5" className="ml-[5px]" /><PBtn n="m6" className="ml-[9px]" />
              </div>
              <div className="h-[34px] flex items-center pl-[4px] gap-[3px] pt-[6px] text-[10.5px] text-[#1a1a40]"><BigCheck /><span>Viditelnosti:</span></div>
              {/* strom */}
              <div className="h-[146px] w-[209px] shrink-0 ml-[1px] border border-[#8a8a8a] bg-[#fbfaf2] relative flex flex-col overflow-hidden text-[10.5px] text-[#1c1c44]">
                <span className="absolute left-[12px] top-[12px] h-[60px] border-l border-dotted border-[#555]" />
                <span className="absolute left-[32px] top-[12px] h-[28px] border-l border-dotted border-[#555]" />
                <span className="absolute left-[32px] top-[76px] h-[44px] border-l border-dotted border-[#555]" />
                <span className="absolute left-[50px] top-[44px] h-[12px] border-l border-dotted border-[#555]" />
                <div className="flex-1 min-h-0 flex flex-col w-[191px] whitespace-nowrap overflow-hidden">
                  <div className="h-[16px] shrink-0 flex items-center pl-[8px]"><Exp open /><Dots w="w-[9px]" /><HalfCheck /><span className="ml-[2px]"><FoldOpen /></span><span className="ml-[3px]">Uživatelsky</span></div>
                  <div className="h-[16px] shrink-0 flex items-center pl-[29px]"><Dots w="w-[15px]" /><Check /><span className="ml-[4px]"><Fold /></span><span className="ml-[3px]">Gruppe 1</span></div>
                  <div className="h-[16px] shrink-0 flex items-center pl-[28px]"><Exp open /><Dots w="w-[7px]" /><Check /><span className="ml-[3px]"><FoldOpen /></span><span className="ml-[3px]">Kontrola modelu</span></div>
                  <div className="h-[16px] shrink-0 flex items-center pl-[49px]"><Dots w="w-[14px]" /><Check /><span className="ml-[8px] w-[11px] h-[11px] shrink-0 bg-[#6b9cff] border border-[#27357a]" /><span className="ml-[4px]">Identické uzly 2,17</span></div>
                  <div className="h-[16px] shrink-0 flex items-center pl-[8px]"><Exp open /><Dots w="w-[9px]" /><HalfCheck /><span className="ml-[2px]"><FoldOpen /></span><span className="ml-[3px]">Generované</span></div>
                  <div className="h-[16px] shrink-0 flex items-center pl-[28px]"><Exp /><Dots w="w-[7px]" /><Check /><span className="ml-[3px]"><Fold /></span><span className="ml-[3px]">Linie podle typu</span></div>
                  <div className="h-[16px] shrink-0 flex items-center pl-[28px]"><Exp /><Dots w="w-[7px]" /><Check /><span className="ml-[3px]"><Fold /></span><span className="ml-[3px]">Plochy dle excentricity</span></div>
                  <div className="h-[16px] shrink-0 flex items-center pl-[28px]"><Exp /><Dots w="w-[7px]" /><Check /><span className="ml-[3px]"><Fold /></span><span className="ml-[3px]">Plochy dle geometrie</span></div>
                </div>
                <div className="absolute right-[2px] top-[2px] w-[14px] h-[127px] bg-[#f0f0f0] flex flex-col items-center">
                  <svg width="9" height="6" viewBox="0 0 9 6" className="mt-[6px]"><path d="M1 5l3.500-3.500L8 5" fill="none" stroke="#555" strokeWidth="1.500" /></svg>
                  <div className="w-full h-[40px] bg-[#cdcdcd] mt-[4px]" />
                  <svg width="9" height="6" viewBox="0 0 9 6" className="mt-auto mb-[6px]"><path d="M1 1l3.500 3.500L8 1" fill="none" stroke="#555" strokeWidth="1.500" /></svg>
                </div>
                <div className="h-[15px] shrink-0 w-full bg-[#f0f0f0] flex items-center">
                  <svg width="6" height="9" viewBox="0 0 6 9" className="ml-[7px]"><path d="M5 1L1.500 4.500 5 8" fill="none" stroke="#555" strokeWidth="1.500" /></svg>
                  <div className="w-[148px] h-full bg-[#cdcdcd] ml-[5px]" />
                  <svg width="6" height="9" viewBox="0 0 6 9" className="ml-[12px]"><path d="M1 1l3.500 3.500L1 8" fill="none" stroke="#555" strokeWidth="1.500" /></svg>
                </div>
              </div>
              <div className="flex pl-[5px] pt-[6px] h-[27px] overflow-hidden w-[209px]">
                <PBtn n="mS" on /><PBtn n="mA" className="ml-[10px]" /><PBtn n="mB" className="ml-[5px]" /><PBtn n="mC" className="ml-[5px]" /><PBtn n="m5" className="ml-[9px]" /><PBtn n="frm" className="ml-[11px]" />
                <div className="w-[25px] h-[20px] shrink-0 ml-[4px] flex items-center justify-center border-2 border-[#2f6fc0] bg-[#cfe4f6]"><Ico n="frmB" size={16} /></div>
              </div>
              <div className="h-[28px] flex items-center pl-[4px] gap-[3px] pt-[12px] text-[10.5px] tracking-[-.1px] text-[#1a1a40] whitespace-nowrap"><BigCheck /><span>Nové objekty přidávat do viditelnosti:</span></div>
              <div className="ml-[4px] mt-[3px] w-[201px] h-[21px] bg-[#e2e2e2] border border-[#c4c4c4] flex items-center justify-end pr-[7px]">
                <svg width="9" height="6" viewBox="0 0 9 6"><path d="M1 1l3.500 3.500L8 1" fill="none" stroke="#666" /></svg>
              </div>
            </div>
            <div className="flex items-center h-[22px] mt-[5px] text-[11px] text-[#2f3a4a] -ml-[2px] whitespace-nowrap">
              <svg width="18" height="15" viewBox="0 0 18 15" className="ml-[4px]"><rect x="1" y="1" width="12" height="10" fill="#f2d98a" stroke="#9a7a20" /><path d="M1 1h12v2H1z" fill="#3a6ac0" /><circle cx="11" cy="9" r="3.500" fill="#cfe0f4" stroke="#223" /><path d="M13 12l3 2" stroke="#223" strokeWidth="1.500" /></svg>
              <span className="ml-[1px] w-[32px]">Data</span>
              <svg width="17" height="16" viewBox="0 0 17 16" className="ml-[3px]"><rect x="2" y="3" width="12" height="12" fill="#e6ecf6" stroke="#345" /><path d="M2 5h12" stroke="#3a6ac0" strokeWidth="2" /><path d="M4 8h8M4 11h8" stroke="#345" /><path d="M6 1l8 1-3 2z" fill="#555" /></svg>
              <span className="ml-[1px] w-[54px]">Zobrazit</span>
              <div className="h-[22px] flex items-center bg-[#eef1f6] border border-[#bfc5cf] border-t-0 rounded-b-[3px] pl-[4px] pr-[3px]">
                <svg width="15" height="15" viewBox="0 0 18 18">{mic('#3a58a8')}</svg>
                <span className="ml-[2px]">Pohledy</span>
              </div>
            </div>
          </div>
          {/* cervene oznaceni */}
          <div className="absolute left-[47px] top-[354px] w-[167px] h-[24px] border-[4px] border-[#ee1c25] pointer-events-none" />
        </aside>

        {/* model */}
        <main className="relative flex-1 min-w-0 bg-white">
          <Model />
          <div className="absolute left-[185px] top-[136px] w-[406px] h-[411px] bg-[#f0f0f0] border border-[#707070] shadow-[0_0_14px_rgba(0,0,0,.35)] flex flex-col text-[10.5px] tracking-[-.13px] text-[#1c1c2c]">
            <div className="h-[25px] shrink-0 bg-white flex items-center pl-[2px] text-[11.2px] text-black relative">
              <span>Identické uzly</span>
              <svg width="11" height="11" viewBox="0 0 11 11" className="ml-auto mr-[10px]"><path d="M.5.500l10 10M10.500.500l-10 10" stroke="#222" /></svg>
            </div>
            <div className="flex-1 min-h-0 px-[7px] pt-[8px] flex flex-col">
              <div className="h-[165px] shrink-0 w-[390px] flex flex-col">
                <GroupHead title="Skupiny s identickými uzly" />
                <div className="h-[120px] shrink-0 bg-white border-t border-l border-[#9a9a9a] ml-px w-[386px] flex relative">
                  <div className="flex-1 min-w-0"><div className="h-[19px] bg-[#0078d7] text-white pl-[5px] leading-[19px] mr-[3px]">2,17</div></div>
                  <div className="w-[15px] bg-[#f0f0f0] flex flex-col items-center">
                    <svg width="9" height="6" viewBox="0 0 9 6" className="mt-[7px]"><path d="M1 5l3.500-3.500L8 5" fill="none" stroke="#555" strokeWidth="1.500" /></svg>
                    <div className="w-full h-[84px] bg-[#cdcdcd] mt-[3px]" />
                    <svg width="9" height="6" viewBox="0 0 9 6" className="mt-[5px]"><path d="M1 1l3.500 3.500L8 1" fill="none" stroke="#555" strokeWidth="1.500" /></svg>
                  </div>
                </div>
                <div className="flex-1 bg-[#f0f3f9] border-r border-b border-l border-[#a9b0ea] flex items-center pl-[1px] pt-[3px]">
                  <span className="w-[116px]">Počet skupin:</span>
                  <span className="w-[28px] h-[18px] bg-[#eeeeee] border-t border-l border-[#9a9a9a] flex items-center justify-end pr-[3px] text-[11px]"><span className="border-l border-black leading-[13px]">1</span></span>
                </div>
              </div>
              <div className="mt-[11px] flex gap-[7px] h-[150px] shrink-0">
                <div className="w-[225px] flex flex-col">
                  <GroupHead title="Co provést s" />
                  <div className="flex-1 bg-[#f0f3f9] border-r border-b border-l border-[#a9b0ea] pl-[2px] pt-[3px] flex flex-col">
                    <div className="h-[18px] leading-[18px] mt-[1px] -ml-px">Identickými uzly?</div>
                    <div className="h-[19px] flex items-center gap-[2px] -mt-[1px]"><Radio on />Nic</div>
                    <div className="h-[19px] flex items-center gap-[2px]"><Radio />Smazat nepoužité uzly</div>
                    <div className="h-[19px] flex items-center gap-[2px] whitespace-nowrap"><Radio />Sloučit uzly/podpory a nepoužité smazat</div>
                    <div className="h-px bg-[#a0a0a0] mt-[16px] mr-[4px] shrink-0" />
                    <div className="flex items-start mt-[8px] pr-[18px] justify-between">
                      <div className="flex items-center gap-[2px] h-[19px] -mt-[3px]"><Radio />Opět hledat s jinou tolerancí</div>
                      <DlgBtn n="check" off />
                    </div>
                  </div>
                </div>
                <div className="w-[158px] flex flex-col">
                  <div className="h-[95px] flex flex-col shrink-0">
                    <GroupHead title="Operaci použít na" gray />
                    <div className="flex-1 bg-[#f0f3f9] border-r border-b border-l border-[#a9b0ea] pl-[2px] pt-[5px] text-[#7c7c7c]">
                      <div className="h-[18px] flex items-center gap-[2px]"><Radio on off />Všechny skupiny</div>
                      <div className="h-[19px] flex items-center gap-[2px]"><Radio off />Vybrané skupiny</div>
                      <div className="pl-[15px] leading-[13px] -mt-[3px]">v seznamu</div>
                    </div>
                  </div>
                  <div className="mt-[10px] flex-1 flex flex-col">
                    <GroupHead title="Tolerance" gray />
                    <div className="flex-1 bg-[#f0f3f9] border-r border-b border-l border-[#a9b0ea] flex items-center pl-[2px]">
                      <span className="w-[17px]">Δ :</span>
                      <div className="w-[80px] h-[19px] border border-[#7a7a7a] bg-[#f0f0f0] flex items-center">
                        <span className="flex-1 text-right pr-[4px] text-black">0.0005</span>
                        <div className="w-[15px] h-full bg-[#e4e4e4] border-l border-[#bbb] flex flex-col items-center justify-around py-[2px]">
                          <span className="w-0 h-0 border-x-[3px] border-x-transparent border-b-[3px] border-b-[#666]" />
                          <span className="w-0 h-0 border-x-[3px] border-x-transparent border-t-[3px] border-t-[#666]" />
                        </div>
                      </div>
                      <span className="ml-[5px]">[m]</span>
                    </div>
                  </div>
                </div>
              </div>
              <div className="h-px w-[390px] bg-[#a0a0a0] mt-[9px] shrink-0" />
              <div className="mt-[11px] flex items-center w-[390px] pl-px relative">
                <DlgBtn n="help" />
                <div className="ml-[9px]"><DlgBtn n="edit" off /></div>
                <div className="ml-[10px]"><DlgBtn n="eyeB" /></div>
                <div className="ml-[9px]"><DlgBtn n="excel" /></div>
                <div className="ml-[10px]"><DlgBtn n="micW" /></div>
                <div className="absolute left-[134px] -top-[7px] w-[35px] h-[34px] border-[4px] border-[#ee1c25]" />
                <div className="ml-auto w-[73px] h-[21px] border-2 border-[#0078d7] bg-[#e1e1e1] flex items-center justify-center text-[10.5px] text-black">OK</div>
                <div className="ml-[10px] mr-[1px] w-[73px] h-[21px] border border-[#adadad] bg-[#e1e1e1] flex items-center justify-center text-[10.5px] text-black">Storno</div>
              </div>
            </div>
          </div>
        </main>
      </div>
    </div>
  );
}
